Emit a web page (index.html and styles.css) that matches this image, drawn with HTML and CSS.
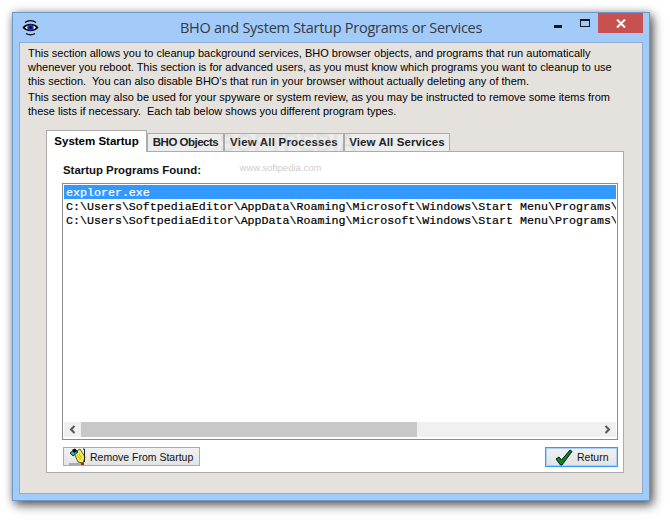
FILE: index.html
```html
<!DOCTYPE html>
<html lang="en">
<head>
<meta charset="utf-8">
<title>BHO and System Startup Programs or Services</title>
<link rel="stylesheet" href="styles.css">
</head>
<body>
<div class="window">
  <header class="titlebar">
    <svg class="app-icon" width="17" height="17" viewBox="0 0 17 17">
      <path d="M3 3.500C6 1 11 1 14 3.500" fill="none" stroke="#000" stroke-width="1.200"/>
      <path d="M0.500 8.500C4 3.500 13 3.500 16.500 8.500C13 13.500 4 13.500 0.500 8.500Z" fill="#000"/>
      <path d="M3 8.500C5.500 5.500 11.500 5.500 14 8.500C11.500 11.500 5.500 11.500 3 8.500Z" fill="#fff"/>
      <circle cx="8.500" cy="8.500" r="3.200" fill="#1a2fc0"/>
      <circle cx="8.500" cy="8.500" r="1.200" fill="#000"/>
      <path d="M4 14.500C6.500 16 10.500 16 13 14.500" fill="none" stroke="#000" stroke-width="1.200"/>
    </svg>
    <h1 class="title">BHO and System Startup Programs or Services</h1>
    <div class="controls">
      <span class="ctl-min"></span>
      <span class="ctl-max"></span>
      <span class="ctl-close">
        <svg width="10" height="9" viewBox="0 0 10 9"><path d="M1 0.500L9 8.500M9 0.500L1 8.500" stroke="#fff" stroke-width="2"/></svg>
      </span>
    </div>
  </header>
  <main class="client">
    <section class="intro">
      <p>This section allows you to cleanup background services, BHO browser objects, and programs that run automatically<br>whenever you reboot. This section is for advanced users, as you must know which programs you want to cleanup to use<br>this section.&nbsp; You can also disable BHO's that run in your browser without actually deleting any of them.</p>
      <p>This section may also be used for your spyware or system review, as you may be instructed to remove some items from<br>these lists if necessary.&nbsp; Each tab below shows you different program types.</p>
    </section>
    <div class="tabs">
      <span class="tab active">System Startup</span>
      <span class="tab t-bho">BHO Objects</span>
      <span class="tab t-proc">View All Processes</span>
      <span class="tab t-serv">View All Services</span>
    </div>
    <section class="panel">
      <div class="panel-label">Startup Programs Found:</div>
      <div class="listbox">
        <ul class="rows">
          <li class="row selected">explorer.exe</li>
          <li class="row">C:\Users\SoftpediaEditor\AppData\Roaming\Microsoft\Windows\Start Menu\Programs\</li>
          <li class="row">C:\Users\SoftpediaEditor\AppData\Roaming\Microsoft\Windows\Start Menu\Programs\</li>
        </ul>
        <div class="scrollbar">
          <span class="sb-btn"><svg width="7" height="9" viewBox="0 0 7 9"><path d="M5.500 1L2 4.500L5.500 8" fill="none" stroke="#555" stroke-width="2"/></svg></span>
          <span class="sb-thumb"></span>
          <span class="sb-track"></span>
          <span class="sb-btn"><svg width="7" height="9" viewBox="0 0 7 9"><path d="M1.500 1L5 4.500L1.500 8" fill="none" stroke="#555" stroke-width="2"/></svg></span>
        </div>
      </div>
      <div class="actions">
        <button class="btn btn-remove" type="button">
          <svg width="18" height="17" viewBox="0 0 18 17">
            <path d="M5 5L11 1L16 9L14 15L9 14Z" fill="#f6ee4a" stroke="#333" stroke-width="0.800"/>
            <path d="M1 5L6 1L9 4L4 8Z" fill="#11b8c8" stroke="#000" stroke-width="0.800"/>
            <path d="M3 2L6 0.500L8 3L5 5Z" fill="#000"/>
            <path d="M8 7L12 12M10 6L13 10" stroke="#a09a20" stroke-width="0.800"/>
            <path d="M14 1L15.500 1L15.500 14" fill="none" stroke="#222" stroke-width="1"/>
            <path d="M0 16H12" stroke="#777" stroke-width="1"/>
            <path d="M12 14.500H15V17H12Z" fill="#d01010"/>
          </svg>
          <span class="btn-label">Remove From Startup</span>
        </button>
        <button class="btn btn-return" type="button">
          <svg width="18" height="17" viewBox="0 0 18 17">
            <path d="M1 10L4 8L6.500 11L15 1L17 2.500L7 16L5.500 16Z" fill="#0a8a0a" stroke="#00104a" stroke-width="1"/>
          </svg>
          <span class="btn-label">Return</span>
        </button>
      </div>
    </section>
  </main>
  <div class="watermark" aria-hidden="true">
    <div class="wm-big">SOFTPEDIA</div>
    <div class="wm-small">www.softpedia.com</div>
  </div>
</div>
</body>
</html>
```
FILE: styles.css
```css
* { box-sizing: border-box; }
html, body { margin: 0; padding: 0; background: #fff; }
body { width: 670px; height: 521px; overflow: hidden; font-family: "Liberation Sans", Arial, sans-serif; }

.window {
  position: relative;
  margin: 12px 0 0 12px;
  width: 638px;
  height: 489px;
  background: #a3cbf9;
  border: 1px solid #6d98c9;
  box-shadow: 3px 4px 10px rgba(0,0,0,.65), 0 0 8px rgba(0,0,0,.18);
  display: flex;
  flex-direction: column;
}

.titlebar { height: 29px; display: flex; align-items: flex-start; position: relative; flex: none; }
.app-icon { margin: 6px 0 0 9px; flex: none; }
.title {
  margin: 0;
  position: absolute;
  left: 0; right: 0; top: 5px;
  text-align: center;
  font: normal 14.500px/20px "Open Sans", "Noto Sans", sans-serif;
  letter-spacing: -0.27px;
  color: #333a44;
}
.controls { margin-left: auto; margin-right: 6px; display: flex; align-items: flex-start; position: relative; }
.ctl-min { width: 8px; height: 3px; background: #15181c; margin-top: 12px; margin-right: 18px; }
.ctl-max { width: 10px; height: 8px; border: 1px solid #15181c; border-top-width: 2px; margin-top: 6px; margin-right: 8px; }
.ctl-close { width: 45px; height: 20px; background: #c75050; display: flex; align-items: center; justify-content: center; }

.client {
  margin: 0 6px 6px 6px;
  flex: 1;
  background: #e5e2de;
  border: 1px solid #8fabd0;
  padding: 3px 19px 0 8px;
  display: flex;
  flex-direction: column;
}

.intro { height: 84px; flex: none; font-size: 11px; line-height: 14px; color: #000; white-space: nowrap; }
.intro p { margin: 0 0 2px; }

.tabs { display: flex; align-items: flex-end; height: 21px; margin-left: 18px; position: relative; z-index: 1; flex: none; }
.tab {
  height: 18px;
  border: 1px solid #acacac;
  border-bottom: 0;
  background: #ececec;
  font-weight: bold;
  font-size: 11.500px;
  line-height: 17px;
  color: #222;
  text-align: center;
  white-space: nowrap;
}
.tab.active { height: 22px; margin-bottom: -1px; width: 101px; background: #fff; line-height: 20px; color: #000; }
.t-bho { width: 77px; letter-spacing: -0.5px; }
.t-proc { width: 120px; letter-spacing: 0.2px; }
.t-serv { width: 106px; letter-spacing: 0.1px; }

.panel {
  margin-left: 18px;
  height: 322px;
  width: 578px;
  background: #fff;
  border: 1px solid #acacac;
  padding: 11px 5px 0 15px;
  flex: none;
}
.panel-label { font-size: 11.400px; font-weight: bold; line-height: 14px; margin-left: 1px; color: #111; }

.listbox {
  margin-top: 6px;
  height: 257px;
  border: 1px solid #8c8c8c;
  padding: 1px 1px 2px;
  display: flex;
  flex-direction: column;
  overflow: hidden;
}
.rows { list-style: none; margin: 0; padding: 0; flex: 1; overflow: hidden; }
.row {
  height: 14px;
  font: 11.650px/15px "Liberation Mono", "Courier New", monospace;
  -webkit-text-stroke: 0.2px currentColor;
  padding-left: 2px;
  white-space: nowrap;
  overflow: hidden;
  color: #000;
}
.row.selected { background: #3399ff; color: #fff; }

.scrollbar { height: 15px; display: flex; background: #f0f0f0; flex: none; }
.sb-btn { width: 17px; flex: none; display: flex; align-items: center; justify-content: center; }
.sb-thumb { width: 336px; background: #c8c8c8; flex: none; }
.sb-track { flex: 1; }

.actions { display: flex; justify-content: space-between; align-items: flex-start; margin-top: 7px; padding-left: 1px; }
.btn {
  display: flex;
  align-items: center;
  padding: 0;
  font: 10.500px "Liberation Sans", Arial, sans-serif;
  color: #111;
  background: linear-gradient(#f1f1f1, #e3e3e3);
  border: 1px solid #acacac;
}
.btn-label { white-space: nowrap; }
.btn-remove { width: 137px; height: 19px; padding-left: 5px; gap: 3px; }
.btn-return { width: 73px; height: 20px; padding-left: 9px; gap: 4px; border-color: #3399ff; box-shadow: inset 0 0 0 1px #a8d2fb; }

.watermark { position: absolute; left: 206px; top: 118px; width: 130px; text-align: center; pointer-events: none; z-index: 2; }
.wm-big { font: bold 24px/24px "Liberation Sans", sans-serif; letter-spacing: 0; color: rgba(170,170,170,.16); }
.wm-small { font: 9.500px/14px "Liberation Sans", sans-serif; color: #cfcdcb; margin-top: 6px; padding-right: 7px; }
```
